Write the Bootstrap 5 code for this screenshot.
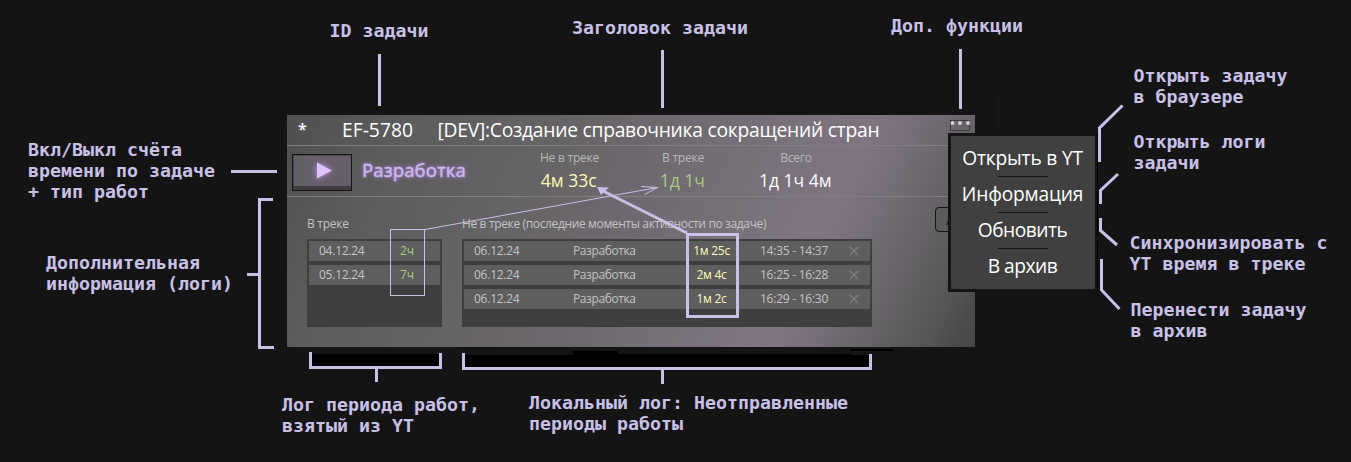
<!DOCTYPE html>
<html lang="ru">
<head>
<meta charset="utf-8">
<title>Карточка задачи</title>
<link rel="stylesheet" href="https://cdn.jsdelivr.net/npm/bootstrap@5.3.0/dist/css/bootstrap.min.css">
<style>
:root{--ink:#c9c0e8}
body{background:#141414;font-family:"Open Sans","Noto Sans",sans-serif;color:#fff;width:1351px;height:462px;overflow:hidden}
.board{width:1351px;height:462px;padding:115px 0 0 287px}
.task{width:688px;height:232px;background:linear-gradient(115deg,#4f4f4f 0%,#5d5d5d 16%,#6a666a 42%,#777079 62%,#7f7581 74%,#756d77 80%,#636064 88%,#464646 100%)}
.line-b{border-bottom:1px solid #7f7f7f}
.task-head{height:31px;font-size:19.3px;line-height:29px}
.c-star{width:55px;padding-left:11px;font-size:16px;font-weight:600}.c-id{width:95.5px}
.c-title{letter-spacing:-.27px}
.task-sum{height:51px}
.play{width:60px;height:37px;margin:8px 10px 0 5px;background:#655e69;border:1px solid #141414;box-shadow:inset 0 -4px 0 #3f3d40,inset 1px 1px 0 #4c484e}
.play svg{filter:drop-shadow(0 0 3px #c79af0)}
.kind{width:152px;font-size:18.5px;line-height:48px;letter-spacing:.12px;color:#cdb8f2;text-shadow:0 0 3px #a585c8,0 0 5px #9a7cc0;-webkit-text-stroke:.4px #cdb8f2}
.stat{font-size:12px;line-height:16px;letter-spacing:-.24px;color:#b8b8b8;padding-top:4px}
.stat strong{font-weight:400;display:block;font-size:17.5px;line-height:24px;letter-spacing:0;margin:2px 0 0 -1.500px;color:#fff}
.w-a{width:111px}.w-b{width:116px}.w-c{width:110px}
.yel,.stat strong.yel{color:#fdfbb5}.grn,.stat strong.grn{color:#a8cb80}
.task-body{padding:19px 0 0 20px;font-size:12px;letter-spacing:-.25px;color:#c4c4c4}
.side{width:131px}
.cap-t{line-height:16px;margin-bottom:7px;white-space:nowrap}
.cap-long{letter-spacing:-.36px}
.log{height:88px;background:#3f3f3f;padding:2px;gap:4px}
.log-l{width:135px}.log-r{width:410px}
.rec{height:20px;background:#5e5e5e;line-height:20px;display:grid;padding-left:10px;white-space:nowrap}
.log-l .rec{grid-template-columns:81px 1fr}
.log-l .grn{letter-spacing:0}
.log-r .rec{grid-template-columns:99px 108px 79px 1fr 21px}
.log-r .job{letter-spacing:-.4px}
.rec .mid{text-align:center;width:61px}
.more{width:60px;height:25px;border:1px solid #141414;border-radius:4px;background:#5b5b5b;color:#141414;line-height:23px;padding-left:10px;margin:-9px 0 0 63px;font-size:14px}
.rec svg{align-self:center}
.pop{left:948px;top:133px;width:149px;height:159px;background:#404040;border:3px solid #141414;border-right-width:2px;padding-top:4px;font-size:19.2px;letter-spacing:-.2px}
.pop div{height:36px;line-height:36px;width:143px;position:relative}
.pop div+div::before{content:"";position:absolute;left:47px;top:0;width:50px;height:1px;background:#141414}
.tight{letter-spacing:-.5px}
.note{position:absolute;font:bold 18.27px/21px "DejaVu Sans Mono",monospace;color:var(--ink);white-space:pre}
.over{left:0;top:0;pointer-events:none}
</style>
</head>
<body>
<main class="board position-relative">
  <section class="task overflow-hidden">
    <div class="task-head line-b d-flex text-nowrap">
      <div class="c-star">*</div>
      <div class="c-id">EF-5780</div>
      <div class="c-title">[DEV]:Создание справочника сокращений стран</div>
    </div>
    <div class="task-sum line-b d-flex text-nowrap">
      <div class="play d-flex align-items-center justify-content-center">
        <svg width="30" height="30" viewBox="0 0 30 30"><path d="M10 4.500V20.500L25 12.500Z" fill="#dcc3fb"/></svg>
      </div>
      <div class="kind">Разработка</div>
      <div class="stat text-center w-a">Не в треке<strong class="yel">4м 33с</strong></div>
      <div class="stat text-center w-b">В треке<strong class="grn">1д 1ч</strong></div>
      <div class="stat text-center w-c">Всего<strong>1д 1ч 4м</strong></div>
    </div>
    <div class="task-body d-flex">
      <div class="me-4 side">
        <div class="cap-t">В треке</div>
        <div class="log log-l d-flex flex-column">
          <div class="rec"><span>04.12.24</span><span class="grn">2ч</span></div>
          <div class="rec"><span>05.12.24</span><span class="grn">7ч</span></div>
        </div>
      </div>
      <div>
        <div class="cap-t cap-long">Не в треке (последние моменты активности по задаче)</div>
        <div class="log log-r d-flex flex-column">
          <div class="rec"><span>06.12.24</span><span class="job">Разработка</span><span class="mid yel">1м 25с</span><span>14:35 - 14:37</span><svg width="10" height="10"><path d="M1 1l8 8M9 1l-8 8" stroke="#808080" stroke-width="1.200"/></svg></div>
          <div class="rec"><span>06.12.24</span><span class="job">Разработка</span><span class="mid yel">2м 4с</span><span>16:25 - 16:28</span><svg width="10" height="10"><path d="M1 1l8 8M9 1l-8 8" stroke="#808080" stroke-width="1.200"/></svg></div>
          <div class="rec"><span>06.12.24</span><span class="job">Разработка</span><span class="mid yel">1м 2с</span><span>16:29 - 16:30</span><svg width="10" height="10"><path d="M1 1l8 8M9 1l-8 8" stroke="#808080" stroke-width="1.200"/></svg></div>
        </div>
      </div>
      <div class="more">А</div>
    </div>
  </section>

  <nav class="pop position-absolute text-center text-nowrap">
    <div>Открыть в YT</div>
    <div>Информация</div>
    <div class="tight">Обновить</div>
    <div class="tight">В архив</div>
  </nav>

  <!-- connectors between the notes and the card -->
  <svg class="over position-absolute" width="1351" height="462" viewBox="0 0 1351 462" fill="none">
    <g fill="#000">
      <path d="M312 354H439V366H312ZM465 355H573V351H618V354H850V355H869V367H465ZM850 349H893V351H850Z"/>
      <path d="M1097 133h1v103h-1zM1097 241h1v51h-1z"/>
    </g>
    <path d="M998.500 97V133M998.500 292V302" stroke="#1a1a1a"/>
    <rect x="950.500" y="120.500" width="19" height="10" stroke="#2a292b" stroke-dasharray="2 1"/>
    <g fill="#d0d0d0"><circle cx="952.500" cy="123" r="2"/><circle cx="960" cy="123" r="2"/><circle cx="968" cy="123" r="2"/></g>
    <g stroke="#c9c0e8" stroke-width="3">
      <path d="M379.500 54V106M662.500 50V108M960.500 49V109M231 171.500H277"/>
      <path d="M273 199.500H259.500V347.500H274M247 274.500H259"/>
      <path d="M310.500 352V367.500H440.500V353M376.500 367V382"/>
      <path d="M463.500 353V368.500H870.500V354M662.500 368V384"/>
      <path d="M1099.500 162V128L1122.500 105.500M1100.500 204V190.500L1118 174M1100.500 218V230.500L1117 245M1101.500 259V290L1119.500 309"/>
      <rect x="687.500" y="234.500" width="50" height="82"/>
      <path d="M687 233L602 190.500"/>
    </g>
    <path d="M597 187L609 187.500L605 191L601 195Z" fill="#c9c0e8"/>
    <rect x="390.500" y="229.500" width="34" height="66" stroke="#c9c0e8"/>
    <path d="M425 229.500L657.500 187.500M641 186.500L657.500 187.500L644.500 194.500" stroke="#c9c0e8"/>
  </svg>

  <div class="note" style="left:329.500px;top:20px">ID задачи</div>
  <div class="note" style="left:572px;top:17px">Заголовок задачи</div>
  <div class="note" style="left:891px;top:15px">Доп. функции</div>
  <div class="note" style="left:28px;top:139px">Вкл/Выкл счёта
времени по задаче
+ тип работ</div>
  <div class="note" style="left:46px;top:252px">Дополнительная
информация (логи)</div>
  <div class="note" style="left:1133.500px;top:65px">Открыть задачу
в браузере</div>
  <div class="note" style="left:1133.500px;top:131px">Открыть логи
задачи</div>
  <div class="note" style="left:1129.500px;top:232px">Синхронизировать с
YT время в треке</div>
  <div class="note" style="left:1130.500px;top:299px">Перенести задачу
в архив</div>
  <div class="note" style="left:282px;top:394px">Лог периода работ,
взятый из YT</div>
  <div class="note" style="left:529px;top:392px">Локальный лог: Неотправленные
периоды работы</div>
</main>
<script src="https://cdn.jsdelivr.net/npm/bootstrap@5.3.0/dist/js/bootstrap.bundle.min.js"></script>
</body>
</html>
